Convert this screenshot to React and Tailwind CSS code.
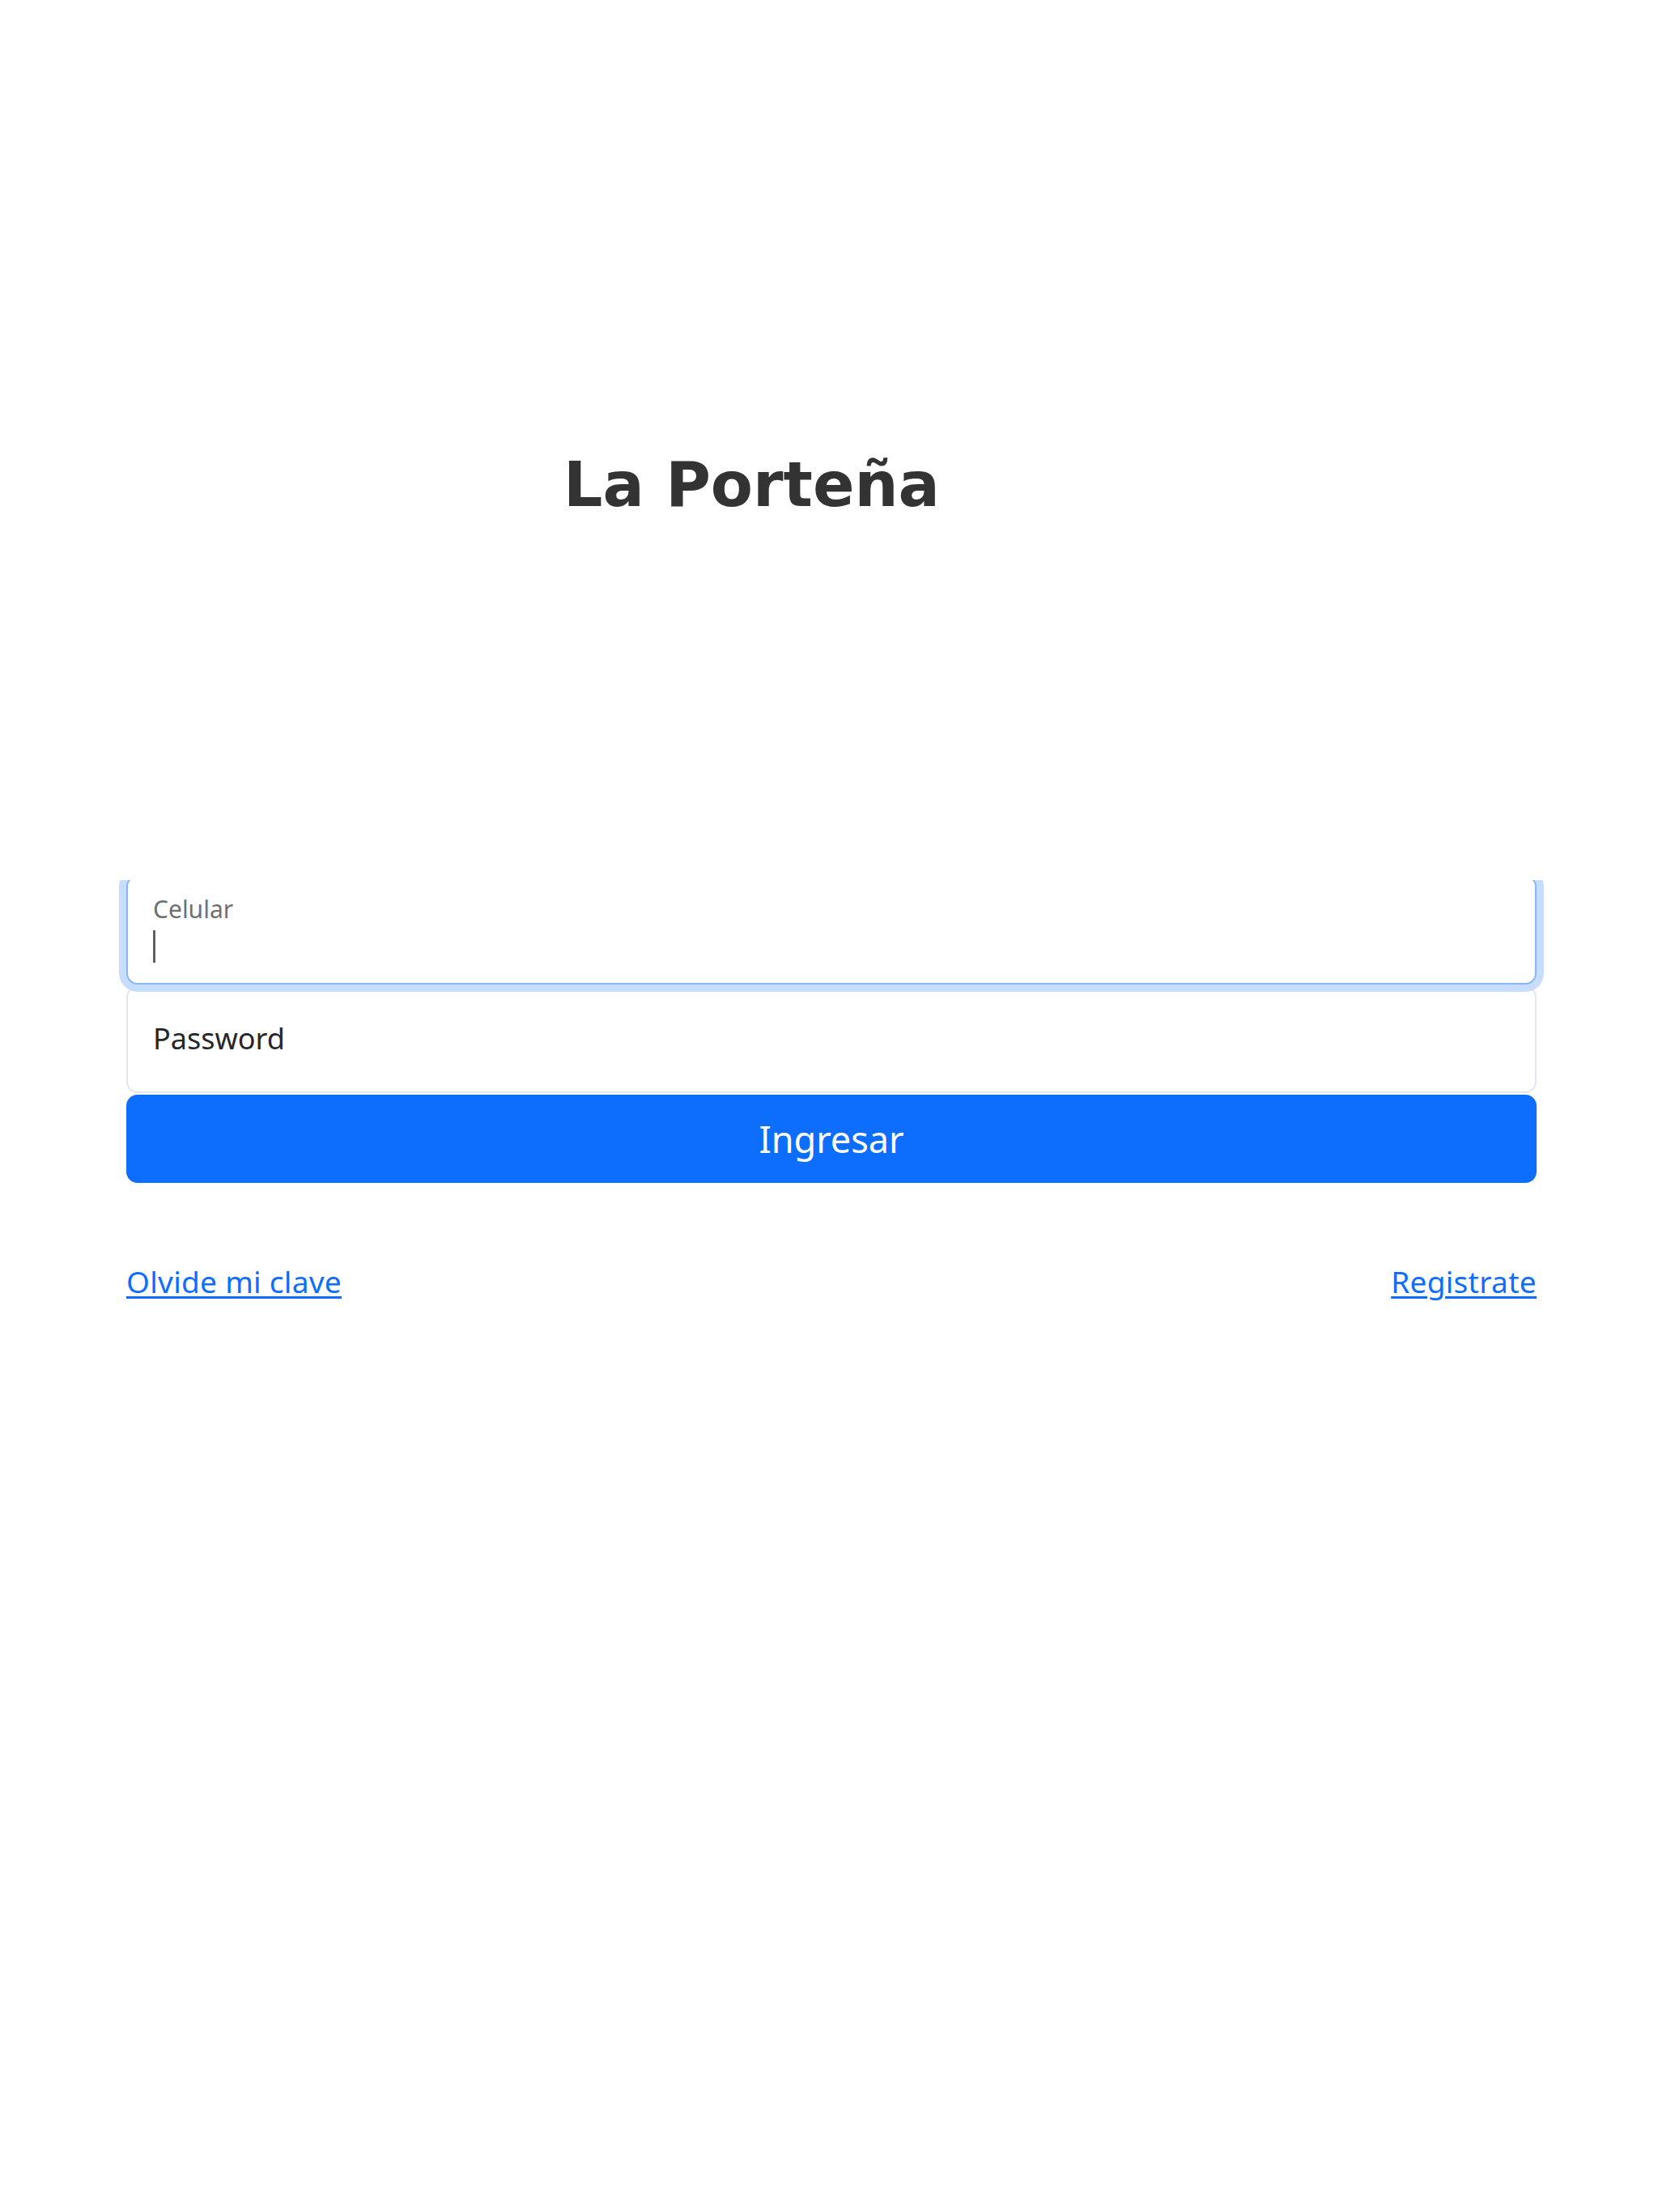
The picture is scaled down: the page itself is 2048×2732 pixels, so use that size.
import React from "react";

const sans = "font-['Noto_Sans','Open_Sans',sans-serif]";

const LoginForm = () => (
  <div className="ml-[156px] w-[1742px] flex flex-col">
    {/* Celular field, focused (top edge clipped as in the capture) */}
    <div className="mt-[436px] h-[135px] rounded-[14px] border-2 border-[#86b7fe] bg-white shadow-[0_0_0_9px_#c6ddfe] [clip-path:inset(6px_-14px_-14px_-14px)] pl-[31px] pt-[20px]">
      <p className={`${sans} text-[30px] leading-[40px] text-[#6e7072]`}>Celular</p>
      <span className="block mt-[6px] w-[3px] h-[40px] bg-[#5f5f5f]" />
    </div>

    {/* Password field */}
    <div className="mt-[2px] h-[132px] rounded-[14px] border-2 border-[#e3e6ea] bg-white pl-[31px] pt-[36px]">
      <p className={`${sans} text-[36px] leading-[54px] text-[#24272b]`}>Password</p>
    </div>

    <button
      type="button"
      className={`${sans} mt-[2px] h-[109px] w-full rounded-[14px] bg-[#0d6efd] text-white text-[45px] leading-[60px]`}
    >
      Ingresar
    </button>

    <div className={`${sans} mt-[95px] flex justify-between text-[37px] leading-[54px] tracking-[0.3px] text-[#0d6efd]`}>
      <a href="#" className="underline underline-offset-[4px]">
        Olvide mi clave
      </a>
      <a href="#" className="underline underline-offset-[4px]">
        Registrate
      </a>
    </div>
  </div>
);

export default function App() {
  return (
    <div className="min-h-[2732px] w-full bg-white">
      <div className="pt-[553px] pl-[696px]">
        <h1 className="font-['DejaVu_Sans','Verdana',sans-serif] font-bold text-[76px] leading-[92px] text-[#333333]">
          La Porteña
        </h1>
      </div>
      <LoginForm />
    </div>
  );
}
